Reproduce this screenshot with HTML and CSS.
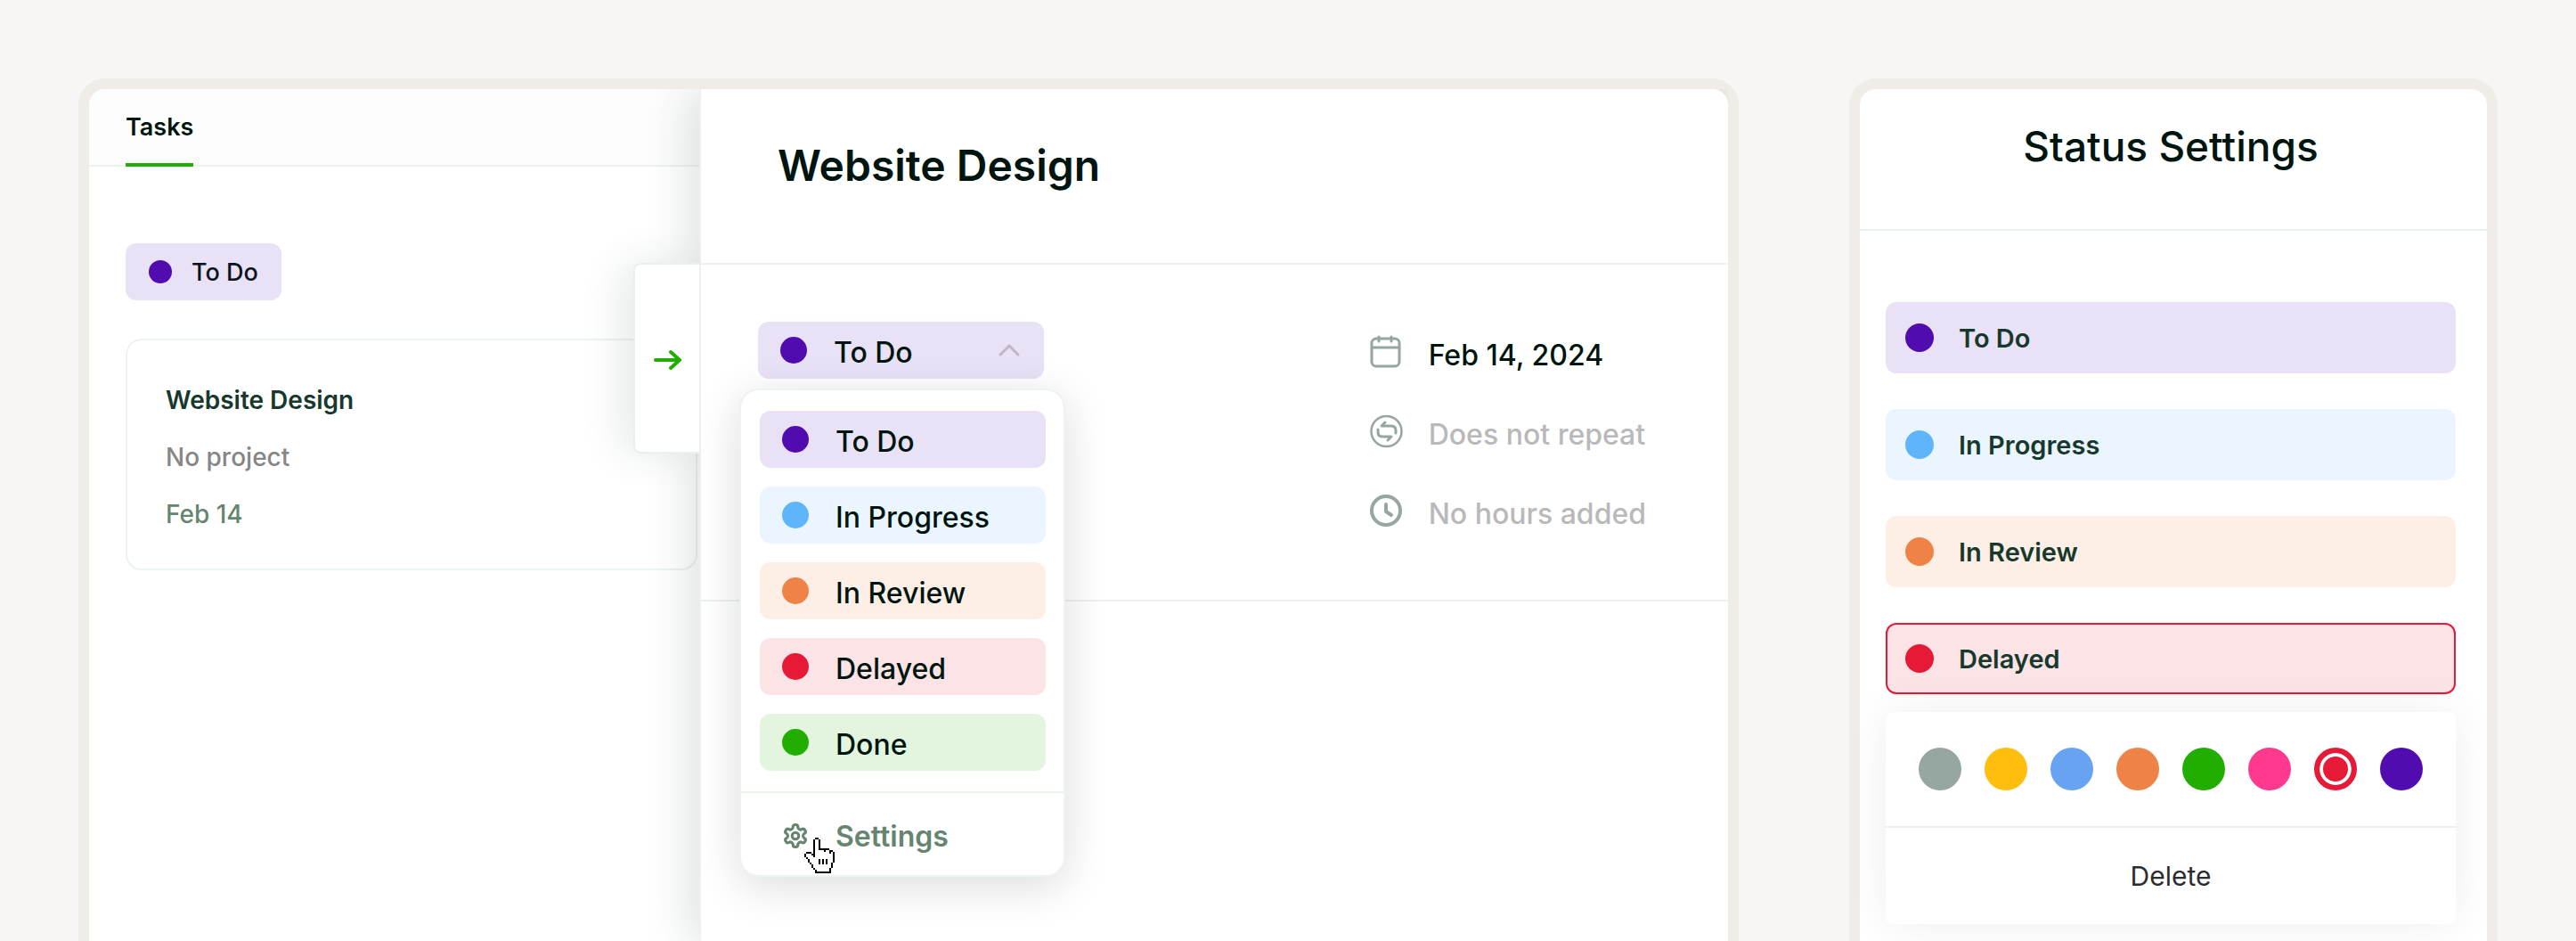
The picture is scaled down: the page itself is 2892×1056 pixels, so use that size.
FILE: index.html
```html
<!DOCTYPE html>
<html lang="en">
<head>
  <meta charset="UTF-8">
  <meta name="viewport" content="width=device-width, initial-scale=1.0">
  <title>Website Design - Tasks</title>
  <link rel="stylesheet" href="styles.css">
</head>
<body>
  <main class="page">
    <div class="frame board">
      <section class="list">
        <nav class="tabs">
          <a class="tab" href="#">Tasks</a>
        </nav>
        <div class="list-body">
          <div class="chip purple"><span class="dot"></span>To Do</div>
          <article class="card">
            <h2 class="card-title">Website Design</h2>
            <p class="card-project">No project</p>
            <p class="card-date">Feb 14</p>
          </article>
        </div>
      </section>

      <section class="detail">
        <button class="handle" type="button" aria-label="Close panel">
          <svg width="34" height="26" viewBox="0 0 34 26" fill="none" stroke="#22ad01" stroke-width="4" stroke-linecap="round" stroke-linejoin="round">
            <path d="M4 13h27M21 4l10 9-10 9"/>
          </svg>
        </button>
        <header class="detail-head">
          <h1 class="detail-title">Website Design</h1>
        </header>
        <div class="detail-body">
          <div class="status">
            <button class="status-button purple" type="button" aria-haspopup="true" aria-expanded="true">
              <span class="dot"></span>
              <span class="label">To Do</span>
              <svg width="28" height="18" viewBox="0 0 28 18" fill="none" stroke="#bfb6c8" stroke-width="3" stroke-linecap="round" stroke-linejoin="round">
                <path d="M4 14L14 4l10 10"/>
              </svg>
            </button>
            <div class="menu">
              <div class="menu-list">
                <button class="menu-item purple" type="button"><span class="dot"></span><span class="label">To Do</span></button>
                <button class="menu-item blue" type="button"><span class="dot"></span><span class="label">In Progress</span></button>
                <button class="menu-item orange" type="button"><span class="dot"></span><span class="label">In Review</span></button>
                <button class="menu-item red" type="button"><span class="dot"></span><span class="label">Delayed</span></button>
                <button class="menu-item green" type="button"><span class="dot"></span><span class="label">Done</span></button>
              </div>
              <button class="menu-settings" type="button">
                <svg width="30" height="32" viewBox="0 0 24 24" fill="none" stroke="#668570" stroke-width="2.500" stroke-linecap="round" stroke-linejoin="round">
                  <path d="M12.220 2h-.44a2 2 0 0 0-2 2v.18a2 2 0 0 1-1 1.730l-.43.25a2 2 0 0 1-2 0l-.15-.08a2 2 0 0 0-2.730.73l-.22.38a2 2 0 0 0 .73 2.730l.15.1a2 2 0 0 1 1 1.720v.51a2 2 0 0 1-1 1.740l-.15.09a2 2 0 0 0-.73 2.730l.22.38a2 2 0 0 0 2.730.73l.15-.08a2 2 0 0 1 2 0l.43.25a2 2 0 0 1 1 1.730V20a2 2 0 0 0 2 2h.44a2 2 0 0 0 2-2v-.18a2 2 0 0 1 1-1.730l.43-.25a2 2 0 0 1 2 0l.15.08a2 2 0 0 0 2.730-.73l.22-.39a2 2 0 0 0-.73-2.730l-.15-.08a2 2 0 0 1-1-1.740v-.5a2 2 0 0 1 1-1.740l.15-.09a2 2 0 0 0 .73-2.730l-.22-.38a2 2 0 0 0-2.730-.73l-.15.08a2 2 0 0 1-2 0l-.43-.25a2 2 0 0 1-1-1.730V4a2 2 0 0 0-2-2z"/>
                  <circle cx="12" cy="12" r="3"/>
                </svg>
                <span class="label">Settings</span>
              </button>
              <svg class="cursor" width="36" height="42" viewBox="0 0 18 21" shape-rendering="crispEdges">
                <path fill="#fff" d="M6 1h2v6h2v1h3v1h2v1h1v5h-1v4H6v-2H5v-1H4v-1H3v-2H2v-1H1v-2h3v1h2z"/>
                <path fill="#000" d="M6 0h2v1H6zM5 1h1v10H5zM8 1h1v5H8zM8 6h4v1H8zM11 7h1v1h-1zM12 6h2v1h-2zM14 7h1v2h-1zM15 7h1v1h-1zM16 8h1v6h-1zM15 14h1v3h-1zM14 17h1v3h-1zM6 19h9v1H6zM6 18h1v1H6zM5 17h1v1H5zM4 15h1v2H4zM3 14h1v1H3zM2 12h1v2H2zM1 11h1v1H1zM0 9h1v2H0zM1 8h3v1H1zM4 9h1v1H4zM8 12h1v3H8zM10 12h1v3h-1zM12 12h1v3h-1z"/>
              </svg>
            </div>
          </div>
          <ul class="facts">
            <li class="fact">
              <svg width="38" height="40" viewBox="0 0 38 40" fill="none" stroke="#96a6a1" stroke-width="3" stroke-linecap="round">
                <rect x="2" y="5" width="31" height="31" rx="5"/>
                <path d="M2 15h31M10 3v5M24 3v5"/>
              </svg>
              <span>Feb 14, 2024</span>
            </li>
            <li class="fact empty">
              <svg width="38" height="40" viewBox="0 0 38 40" fill="none" stroke="#96a6a1" stroke-width="3" stroke-linecap="round" stroke-linejoin="round">
                <circle cx="18.500" cy="20" r="17" stroke-width="2.500"/>
                <path d="M17 10l-4 4h11q5 0 5 5v3M20 30l4-4H14q-5 0-5-5v-3"/>
              </svg>
              <span>Does not repeat</span>
            </li>
            <li class="fact empty">
              <svg width="38" height="40" viewBox="0 0 38 40" fill="none" stroke="#96a6a1" stroke-width="4" stroke-linecap="round" stroke-linejoin="round">
                <circle cx="18" cy="20" r="16"/>
                <path d="M18 13v8l6 4"/>
              </svg>
              <span>No hours added</span>
            </li>
          </ul>
        </div>
      </section>
    </div>

    <aside class="frame settings">
      <header class="settings-head">
        <h2 class="settings-title">Status Settings</h2>
      </header>
      <div class="settings-body">
        <button class="row purple" type="button"><span class="dot"></span>To Do</button>
        <button class="row blue" type="button"><span class="dot"></span>In Progress</button>
        <button class="row orange" type="button"><span class="dot"></span>In Review</button>
        <button class="row red selected" type="button"><span class="dot"></span>Delayed</button>
        <div class="picker">
          <div class="swatches">
            <input class="swatch gray" type="radio" name="color" aria-label="Gray">
            <input class="swatch yellow" type="radio" name="color" aria-label="Yellow">
            <input class="swatch sky" type="radio" name="color" aria-label="Blue">
            <input class="swatch orange" type="radio" name="color" aria-label="Orange">
            <input class="swatch green" type="radio" name="color" aria-label="Green">
            <input class="swatch pink" type="radio" name="color" aria-label="Pink">
            <input class="swatch red" type="radio" name="color" aria-label="Red" checked>
            <input class="swatch purple" type="radio" name="color" aria-label="Purple">
          </div>
          <button class="delete" type="button">Delete</button>
        </div>
      </div>
    </aside>
  </main>
</body>
</html>
```
FILE: styles.css
```css
* {
  box-sizing: border-box;
}

body {
  margin: 0;
  background-color: #f7f6f4;
  color: #00150f;
  font-family: Inter, "Liberation Sans", sans-serif;
  font-size: 27px;
  font-weight: 500;
}

h1, h2, p, ul {
  margin: 0;
  padding: 0;
}

button {
  font: inherit;
  color: inherit;
  border: none;
  background: none;
  padding: 0;
  text-align: left;
  cursor: pointer;
}

svg {
  display: block;
  flex: none;
}

.page {
  display: flex;
  gap: 124px;
  height: 100vh;
  padding: 88px 88px 0;
  overflow: hidden;
}

.frame {
  border: 12px solid #f0ede8;
  border-bottom: none;
  border-radius: 30px 30px 0 0;
  background-color: #fff;
}

/* status colors */
.purple { --main: #510cb0; --tint: #e9e1f5; }
.blue { --main: #5eb5fa; --tint: #eaf5ff; }
.orange { --main: #ef8347; --tint: #fdeee6; }
.red { --main: #e61937; --tint: #fbe3e6; }
.green { --main: #22ad01; --tint: #e4f5df; }
.gray { --main: #96a6a1; }
.yellow { --main: #ffbe0d; }
.sky { --main: #68a3f2; }
.pink { --main: #ff3a8e; }

.dot {
  flex: none;
  width: 30px;
  height: 30px;
  border-radius: 50%;
  background-color: var(--main);
}

/* task list */
.board {
  display: flex;
  flex: 1;
}

.list {
  flex: none;
  width: 685px;
}

.tabs {
  display: flex;
  height: 87px;
  padding-left: 41px;
  border-bottom: 2px solid #edf1ef;
  border-top-left-radius: 18px;
  background-color: #fdfdfd;
}

.tab {
  height: 87px;
  line-height: 86px;
  border-bottom: 4px solid #22ad01;
  color: inherit;
  font-weight: 600;
  text-decoration: none;
}

.list-body {
  padding: 86px 2px 0 41px;
}

.chip {
  display: inline-flex;
  align-items: center;
  gap: 22px;
  height: 64px;
  padding: 0 26px;
  border-radius: 12px;
  background-color: var(--tint);
  color: #0a1420;
}

.chip .dot {
  width: 26px;
  height: 26px;
}

.card {
  margin-top: 43px;
  padding: 35px 43px 29px;
  border: 2px solid #edf3ee;
  border-radius: 18px;
  color: #17382c;
  font-size: 28px;
  line-height: 64px;
}

.card-title {
  font-size: 28px;
  font-weight: 600;
}

.card-project {
  color: #868686;
}

.card-date {
  color: #668570;
}

/* task detail */
.detail {
  position: relative;
  flex: 1;
  border-left: 2px solid #edf1ef;
  border-top-right-radius: 18px;
  background-color: #fff;
  box-shadow: -12px 0 50px rgba(20, 50, 40, 0.14);
  clip-path: inset(0 0 0 -200px);
}

.handle {
  position: absolute;
  top: 195px;
  left: -76px;
  display: flex;
  align-items: center;
  justify-content: center;
  width: 76px;
  height: 214px;
  padding-top: 4px;
  border: 2px solid #eaf1ec;
  border-radius: 8px 0 0 8px;
  background-color: #fff;
  box-shadow: -14px 0 44px rgba(20, 50, 40, 0.1);
  clip-path: inset(-80px 0 -80px -100px);
}

.detail-head {
  height: 197px;
  padding: 56px 86px 0;
  border-bottom: 2px solid #edf2ee;
}

.detail-title {
  font-size: 48px;
  font-weight: 600;
  line-height: 60px;
}

.detail-body {
  display: flex;
  justify-content: space-between;
  height: 378px;
  padding: 64px 92px 0 64px;
  border-bottom: 2px solid #edf2ee;
}

.status {
  position: relative;
  font-size: 32px;
}

.status-button,
.menu-item {
  display: flex;
  align-items: center;
  gap: 30px;
  width: 321px;
  height: 64px;
  padding: 0 25px;
  border-radius: 12px;
  background-color: var(--tint);
}

.label {
  flex: 1;
  padding-top: 4px;
}

.menu {
  position: absolute;
  top: 75px;
  left: -21px;
  width: 366px;
  border: 2px solid #edf3ee;
  border-radius: 22px;
  background-color: #fff;
  box-shadow: 0 10px 50px rgba(0, 0, 0, 0.14);
}

.menu-list {
  display: flex;
  flex-direction: column;
  gap: 21px;
  padding: 23px 21px;
  border-bottom: 2px solid #ebf3eb;
}

.menu-settings {
  display: flex;
  align-items: center;
  gap: 30px;
  width: 100%;
  height: 92px;
  padding: 4px 46px 0;
  color: #668570;
  font-weight: 600;
}

.menu-settings .label {
  padding-top: 0;
}

.cursor {
  position: absolute;
  left: 71px;
  bottom: 0;
}

.facts {
  list-style: none;
  font-size: 32px;
}

.fact {
  display: flex;
  gap: 28px;
  height: 89px;
  padding-top: 14px;
  line-height: 48px;
}

.empty {
  color: #b9b9b9;
}

/* status settings */
.settings {
  flex: none;
  width: 728px;
}

.settings-head {
  height: 159px;
  padding: 34px 6px 0 0;
  border-bottom: 2px solid #ebf2eb;
}

.settings-title {
  font-size: 46px;
  font-weight: 500;
  line-height: 60px;
  text-align: center;
}

.settings-body {
  display: flex;
  flex-direction: column;
  gap: 40px;
  padding: 80px 35px 0 29px;
}

.row {
  display: flex;
  align-items: center;
  gap: 28px;
  height: 80px;
  padding: 0 22px;
  border-radius: 12px;
  background-color: var(--tint);
  color: #17382c;
  font-size: 29px;
  font-weight: 600;
}

.row .dot {
  width: 32px;
  height: 32px;
}

.selected {
  padding: 0 20px;
  border: 2px solid var(--main);
}

.picker {
  margin-top: -20px;
  border-radius: 8px;
  background-color: #fff;
  box-shadow: 0 0 50px rgba(0, 0, 0, 0.07);
}

.swatches {
  display: flex;
  justify-content: space-between;
  padding: 40px 37px;
  border-bottom: 2px solid #ebf2eb;
}

.swatch {
  appearance: none;
  width: 48px;
  height: 48px;
  margin: 0;
  border-radius: 50%;
  background-color: var(--main);
}

/* white ring inside the picked color */
.swatch:checked {
  border: 6px solid var(--main);
  box-shadow: inset 0 0 0 4px #fff;
}

.delete {
  width: 100%;
  height: 108px;
  color: #2b2c30;
  font-size: 30px;
  font-weight: 400;
  text-align: center;
}
```
